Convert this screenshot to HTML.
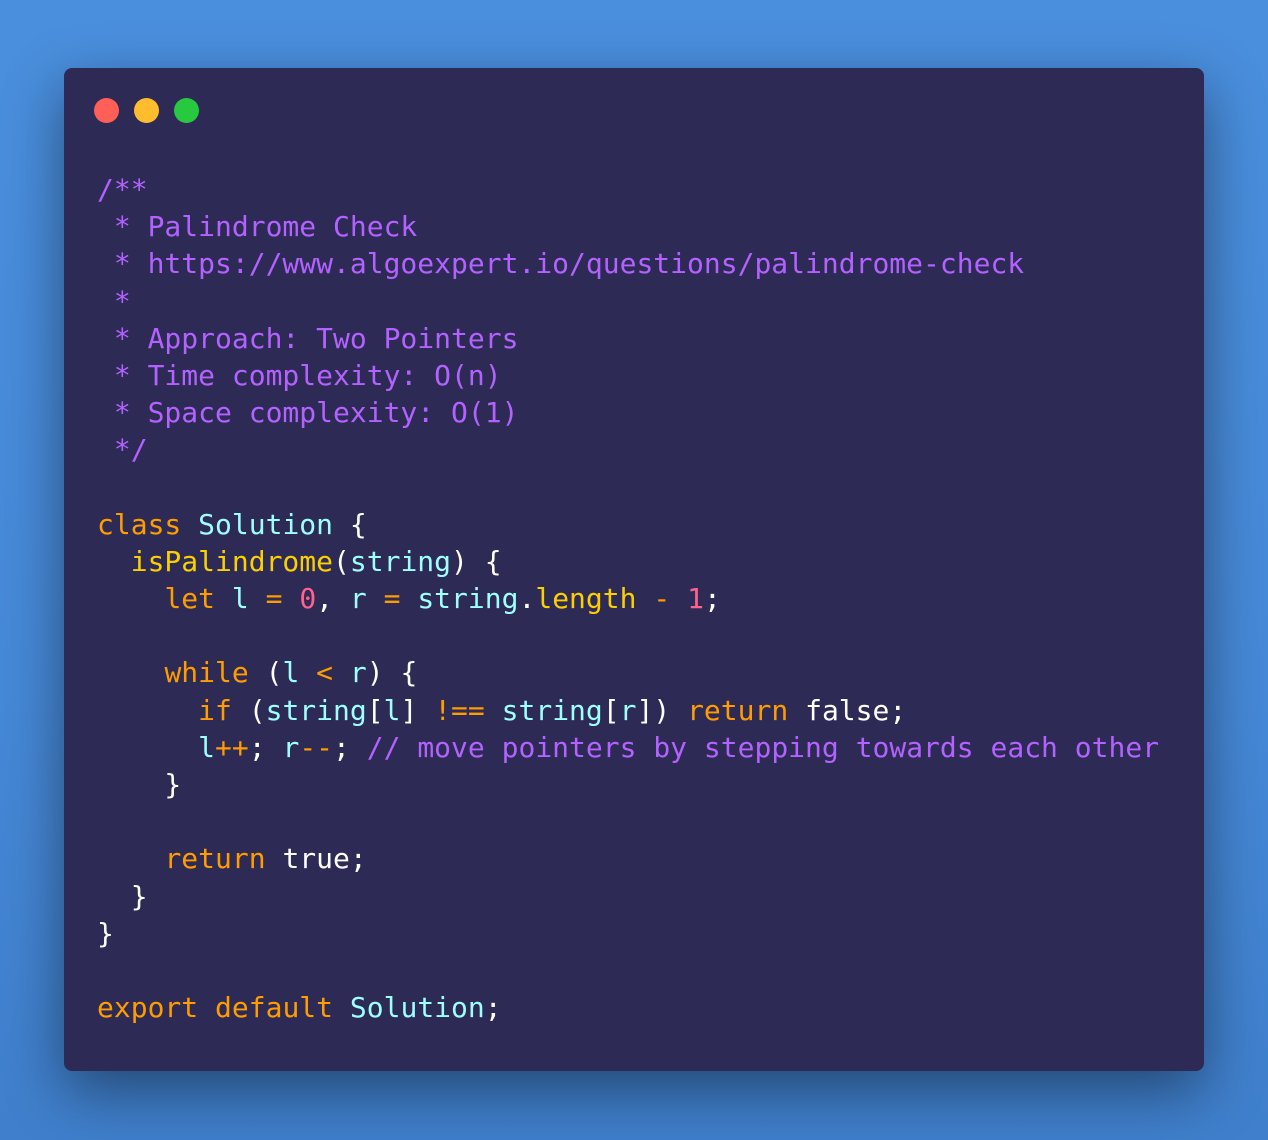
<!DOCTYPE html>
<html><head><meta charset="utf-8"><style>
html,body{margin:0;padding:0;width:1268px;height:1140px;overflow:hidden;background:linear-gradient(180deg,#4a8fde 0%,#4689d8 60%,#3f7fcc 100%);}
.win{position:absolute;left:64px;top:68px;width:1140px;height:1003px;background:#2d2a55;border-radius:8px;box-shadow:0 20px 60px rgba(0,0,0,0.45);}
.dot{position:absolute;top:98px;width:25px;height:25px;border-radius:50%;}
pre{position:absolute;left:97px;top:171px;margin:0;font-family:"DejaVu Sans Mono","Liberation Mono",monospace;font-size:28px;line-height:37.18px;color:#fff;}
.c{color:#b362ff}.k{color:#ff9d00}.t{color:#9effff}.y{color:#fad000}.n{color:#ff628c}
</style></head><body>
<div class="win"></div>
<div class="dot" style="left:94px;background:#ff5f56"></div>
<div class="dot" style="left:134px;background:#ffbd2e"></div>
<div class="dot" style="left:174px;background:#27c93f"></div>
<pre><span class="c">/**
 * Palindrome Check
 * https://www.algoexpert.io/questions/palindrome-check
 *
 * Approach: Two Pointers
 * Time complexity: O(n)
 * Space complexity: O(1)
 */</span>

<span class="k">class</span> <span class="t">Solution</span> {
  <span class="y">isPalindrome</span>(<span class="t">string</span>) {
    <span class="k">let</span> <span class="t">l</span> <span class="k">=</span> <span class="n">0</span>, <span class="t">r</span> <span class="k">=</span> <span class="t">string</span>.<span class="y">length</span> <span class="k">-</span> <span class="n">1</span>;

    <span class="k">while</span> (<span class="t">l</span> <span class="k">&lt;</span> <span class="t">r</span>) {
      <span class="k">if</span> (<span class="t">string</span>[<span class="t">l</span>] <span class="k">!==</span> <span class="t">string</span>[<span class="t">r</span>]) <span class="k">return</span> false;
      <span class="t">l</span><span class="k">++</span>; <span class="t">r</span><span class="k">--</span>; <span class="c">// move pointers by stepping towards each other</span>
    }

    <span class="k">return</span> true;
  }
}

<span class="k">export</span> <span class="k">default</span> <span class="t">Solution</span>;</pre>
</body></html>
